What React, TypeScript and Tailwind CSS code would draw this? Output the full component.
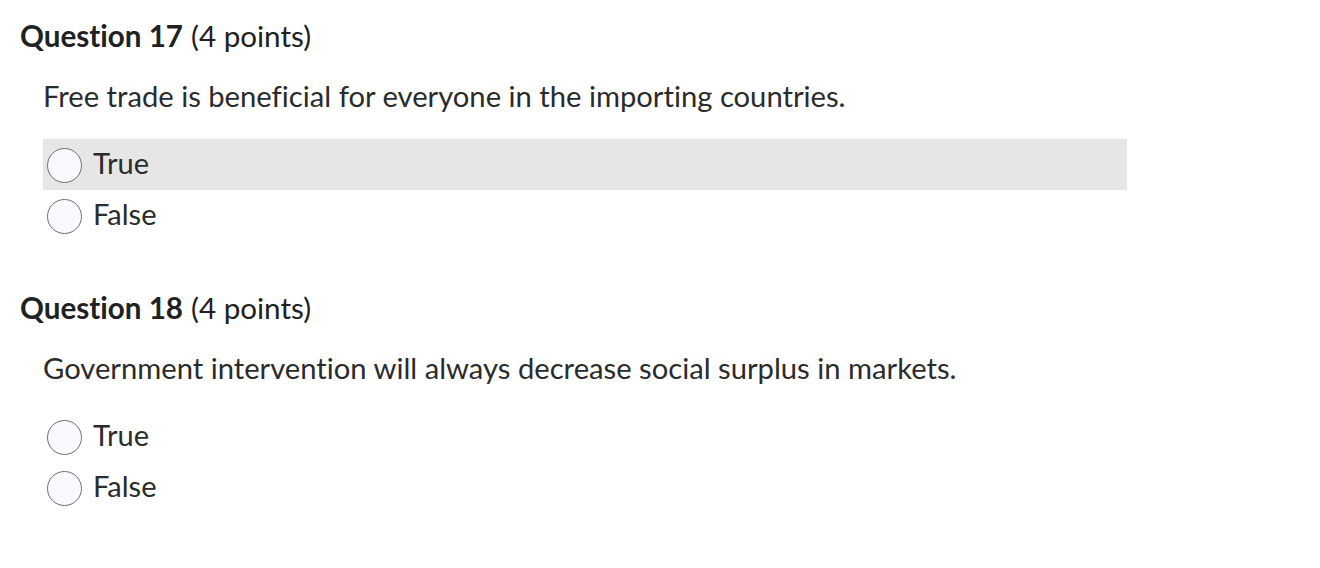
import React from 'react';

type Q = { n: number; text: string; highlight?: number };

const questions: Q[] = [
  { n: 17, text: 'Free trade is beneficial for everyone in the importing countries.', highlight: 0 },
  { n: 18, text: 'Government intervention will always decrease social surplus in markets.' },
];

function Option({ label, hl }: { label: string; hl?: boolean }) {
  return (
    <div className={`flex items-center h-[51px] w-[1084px] ${hl ? 'bg-[#e6e6e6]' : ''}`}>
      <span className="ml-[4px] mt-[2px] w-[35px] h-[35px] rounded-full border border-[#6f6f6f] bg-[#f9fafe] shrink-0" />
      <span className="ml-[11px] pb-[4px] text-[29px] text-[#2a2b2c]">{label}</span>
    </div>
  );
}

export default function App() {
  return (
    <div
      className="bg-white w-[1320px] h-[568px] pt-[16px] [font-variant-ligatures:none]"
      style={{ fontFamily: 'Lato, "Open Sans", sans-serif' }}
    >
      {questions.map((q, i) => (
        <div key={q.n} className={i > 0 ? 'mt-[47px]' : ''}>
          <div className="pl-[20px] h-[40px] flex items-center text-[29.6px] text-[#202122]">
            <span className="font-bold">Question {q.n}</span>
            <span className="ml-[8px]">(4 points)</span>
          </div>
          <div className="pl-[43px] mt-[20px] h-[40px] flex items-center text-[29.2px] text-[#2a2b2c]">{q.text}</div>
          <div className="pl-[43px] mt-[23px]">
            <Option label="True" hl={q.highlight === 0} />
            <Option label="False" />
          </div>
        </div>
      ))}
    </div>
  );
}
